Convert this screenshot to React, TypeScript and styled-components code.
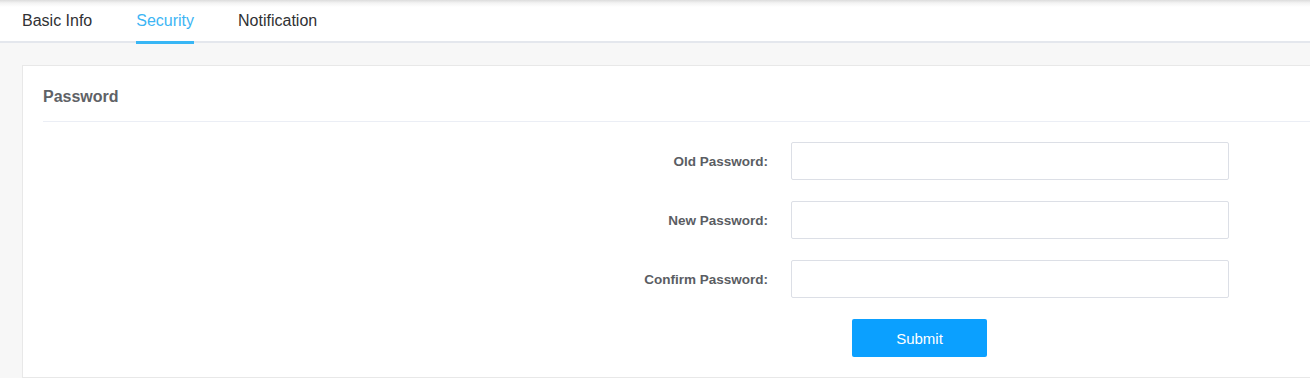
import React from "react";
import styled, { createGlobalStyle } from "styled-components";

const Global = createGlobalStyle`
  html, body { margin: 0; padding: 0; }
  body {
    background: #f7f7f7;
    font-family: "Liberation Sans", Arial, sans-serif;
    overflow: hidden;
  }
`;

const Page = styled.div`
  display: flex;
  flex-direction: column;
  width: 1310px;
`;

const TabBar = styled.div`
  display: flex;
  gap: 44px;
  height: 40px;
  padding: 1px 0 0 22px;
  background: linear-gradient(to bottom, #dcdcdc 0px, #f3f3f3 3px, #ffffff 7px);
  border-bottom: 2px solid #e4e7ed;
`;

const Tab = styled.div<{ $active?: boolean }>`
  position: relative;
  display: flex;
  align-items: center;
  font-size: 16px;
  color: ${(p) => (p.$active ? "#3db5f4" : "#303133")};
  cursor: pointer;
  &::after {
    content: "";
    display: ${(p) => (p.$active ? "block" : "none")};
    position: absolute;
    left: 0;
    right: 0;
    bottom: -3px;
    height: 3px;
    background: #38b6f5;
  }
`;

const Content = styled.div`
  display: flex;
  padding: 22px 0 0 22px;
`;

const Card = styled.div`
  flex: 1;
  background: #ffffff;
  border: 1px solid #e8e8e8;
  border-right: none;
  padding: 0 0 20px 20px;
`;

const CardHeader = styled.div`
  display: flex;
  align-items: center;
  box-sizing: border-box;
  height: 56px;
  padding-top: 7px;
  border-bottom: 1px solid #ebeef5;
  font-size: 16px;
  font-weight: bold;
  color: #5f6266;
`;

const Form = styled.div`
  display: grid;
  grid-template-columns: 725px 438px;
  column-gap: 23px;
  row-gap: 21px;
  padding-top: 20px;
`;

const Label = styled.label`
  display: flex;
  align-items: center;
  justify-content: flex-end;
  height: 38px;
  font-size: 13.5px;
  font-weight: bold;
  color: #5a5d63;
`;

const Input = styled.input`
  box-sizing: border-box;
  width: 438px;
  height: 38px;
  border: 1px solid #dcdfe6;
  border-radius: 2px;
  padding: 0 12px;
  font-size: 14px;
  outline: none;
  background: #fff;
`;

const ButtonCell = styled.div`
  grid-column: 2;
  padding-left: 61px;
`;

const Button = styled.button`
  width: 135px;
  height: 38px;
  border: none;
  border-radius: 2px;
  background: #0ba0ff;
  color: #ffffff;
  font-family: "Liberation Sans", Arial, sans-serif;
  font-size: 15px;
  cursor: pointer;
`;

const fields = ["Old Password:", "New Password:", "Confirm Password:"];

export default function App() {
  return (
    <Page>
      <Global />
      <TabBar>
        <Tab>Basic Info</Tab>
        <Tab $active>Security</Tab>
        <Tab>Notification</Tab>
      </TabBar>
      <Content>
        <Card>
          <CardHeader>Password</CardHeader>
          <Form>
            {fields.map((f) => (
              <React.Fragment key={f}>
                <Label>{f}</Label>
                <Input type="password" />
              </React.Fragment>
            ))}
            <ButtonCell>
              <Button>Submit</Button>
            </ButtonCell>
          </Form>
        </Card>
      </Content>
    </Page>
  );
}
